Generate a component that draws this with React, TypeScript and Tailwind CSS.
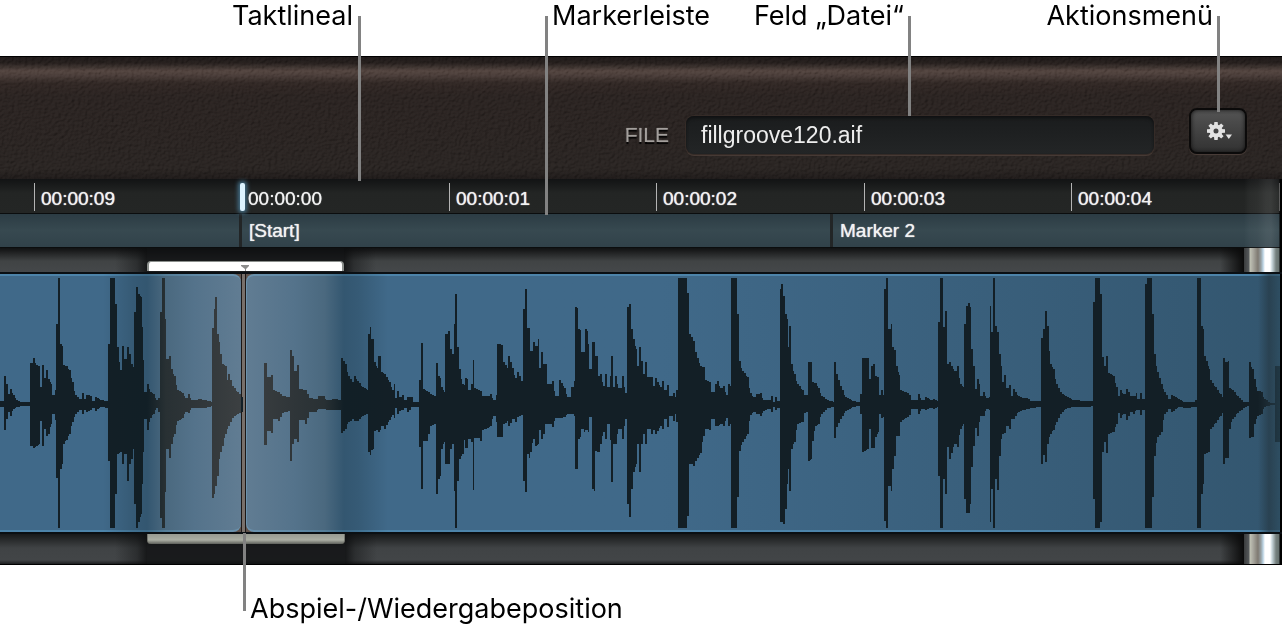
import { useId } from 'react'

// Envelope of the recording: [x, height above the axis, depth below it]
const PEAKS: [number, number, number][] = [
  [0, 3, 3], [4, 28, 26], [6, 20, 15], [8, 10, 8], [10, 15, 12], [13, 9, 5], [16, 4, 3], [20, 2, 2], [29, 2, 2],
  [30, 41, 42], [33, 46, 44], [36, 39, 42], [39, 38, 40], [40, 17, 17], [42, 39, 42], [44, 26, 25], [46, 34, 32],
  [48, 25, 30], [51, 20, 20], [52, 9, 10], [55, 14, 16], [56, 80, 74], [58, 126, 124], [60, 126, 124], [60, 60, 65],
  [62, 58, 60], [63, 39, 40], [66, 38, 36], [69, 34, 30], [72, 22, 18], [75, 9, 10], [79, 5, 6], [82, 11, 10],
  [84, 5, 6], [86, 9, 8], [90, 8, 6], [92, 3, 4], [95, 7, 7], [100, 4, 3], [105, 3, 4], [108, 60, 57],
  [110, 126, 124], [115, 126, 124], [115, 100, 90], [117, 98, 88], [117, 57, 50], [120, 34, 48], [122, 58, 60],
  [124, 45, 50], [127, 57, 77], [129, 50, 60], [131, 40, 55], [133, 37, 45], [134, 92, 100], [136, 117, 124],
  [138, 110, 118], [141, 107, 110], [142, 77, 80], [143, 44, 48], [144, 12, 15], [147, 20, 26], [150, 12, 14],
  [153, 10, 10], [156, 4, 4], [158, 6, 8], [160, 92, 114], [162, 126, 124], [165, 126, 124], [165, 85, 88],
  [166, 45, 45], [169, 48, 54], [171, 35, 40], [174, 28, 30], [177, 14, 17], [182, 11, 14], [185, 6, 8],
  [188, 10, 9], [191, 4, 4], [198, 5, 4], [205, 4, 4], [211, 2, 2], [212, 76, 94], [214, 95, 90], [215, 107, 82],
  [217, 107, 76], [217, 70, 72], [219, 62, 55], [220, 50, 48], [222, 40, 42], [225, 38, 30], [227, 24, 25],
  [228, 30, 22], [232, 18, 14], [237, 12, 10], [241, 7, 8], [243, 6, 7], [243, 0, 0], [263, 0, 0], [264, 41, 41],
  [267, 41, 41], [267, 27, 27], [271, 29, 29], [273, 14, 15], [278, 12, 17], [282, 8, 9], [288, 7, 7],
  [290, 54, 57], [292, 48, 40], [294, 33, 35], [297, 39, 38], [299, 15, 16], [305, 14, 20], [309, 6, 8],
  [315, 5, 8], [318, 8, 5], [323, 8, 5], [326, 4, 6], [332, 5, 6], [340, 4, 6], [341, 46, 29], [345, 40, 25],
  [348, 28, 18], [352, 22, 15], [354, 28, 17], [357, 23, 17], [362, 17, 12], [367, 14, 10], [368, 70, 48],
  [370, 77, 51], [371, 65, 46], [374, 65, 44], [374, 42, 27], [377, 36, 26], [378, 48, 28], [380, 48, 26],
  [381, 32, 22], [384, 30, 25], [389, 22, 16], [392, 14, 11], [394, 20, 14], [395, 6, 4], [397, 13, 10],
  [399, 7, 7], [402, 9, 6], [404, 4, 4], [407, 7, 8], [411, 7, 3], [413, 2, 3], [418, 2, 3], [419, 24, 43],
  [421, 61, 85], [423, 61, 85], [423, 15, 37], [426, 13, 37], [430, 10, 22], [435, 8, 20], [436, 6, 18],
  [436, 41, 90], [438, 41, 90], [438, 28, 75], [440, 26, 72], [441, 17, 45], [444, 12, 38], [445, 70, 60],
  [448, 73, 60], [450, 55, 45], [454, 45, 35], [454, 80, 87], [455, 110, 124], [457, 110, 124], [457, 57, 77],
  [459, 35, 55], [462, 20, 50], [464, 19, 36], [465, 26, 44], [467, 25, 44], [468, 14, 35], [471, 20, 38],
  [473, 44, 86], [474, 44, 86], [474, 16, 34], [480, 13, 37], [482, 8, 26], [485, 8, 25], [490, 10, 22],
  [493, 4, 12], [496, 9, 18], [497, 4, 10], [497, 60, 33], [501, 59, 33], [503, 42, 20], [507, 36, 17],
  [508, 48, 22], [512, 36, 15], [515, 26, 18], [517, 32, 13], [521, 23, 11], [523, 13, 8], [523, 95, 77],
  [525, 115, 88], [527, 115, 88], [527, 76, 50], [529, 76, 54], [530, 53, 48], [533, 62, 35], [535, 58, 42],
  [538, 65, 40], [539, 36, 26], [541, 52, 35], [543, 40, 30], [545, 40, 20], [547, 20, 20], [552, 23, 23],
  [555, 8, 14], [559, 24, 14], [564, 16, 13], [567, 7, 10], [571, 17, 10], [574, 23, 12], [575, 97, 65],
  [578, 95, 68], [578, 75, 35], [580, 74, 33], [581, 52, 25], [584, 52, 28], [585, 75, 26], [587, 73, 26],
  [588, 60, 28], [589, 35, 13], [592, 35, 30], [592, 62, 85], [594, 62, 87], [595, 48, 47], [597, 48, 48],
  [598, 28, 48], [600, 30, 40], [603, 18, 28], [605, 30, 35], [607, 17, 20], [610, 28, 36], [611, 48, 78],
  [613, 48, 78], [613, 17, 40], [615, 28, 40], [618, 16, 25], [622, 28, 35], [625, 11, 15], [627, 97, 100],
  [629, 100, 113], [631, 75, 85], [633, 65, 68], [636, 55, 60], [637, 38, 40], [639, 57, 68], [641, 43, 40],
  [643, 30, 30], [645, 42, 40], [647, 27, 25], [651, 27, 30], [653, 18, 26], [655, 26, 30], [660, 17, 22],
  [662, 23, 25], [664, 14, 15], [667, 19, 23], [669, 8, 12], [673, 11, 17], [675, 7, 10], [676, 14, 18],
  [678, 12, 16], [678, 126, 124], [687, 126, 124], [687, 111, 112], [689, 111, 112], [689, 70, 60], [693, 63, 62],
  [695, 52, 57], [700, 38, 49], [703, 37, 32], [705, 24, 25], [709, 22, 26], [711, 12, 15], [715, 20, 22],
  [717, 23, 22], [720, 16, 20], [723, 18, 22], [726, 9, 14], [728, 20, 22], [730, 18, 20], [731, 126, 124],
  [736, 126, 124], [737, 90, 93], [739, 90, 93], [739, 43, 47], [742, 33, 38], [747, 27, 30], [750, 11, 11],
  [753, 7, 8], [756, 10, 10], [760, 11, 12], [763, 4, 7], [768, 4, 5], [771, 8, 8], [773, 2, 3], [775, 7, 6],
  [777, 3, 4], [780, 4, 4], [780, 115, 118], [781, 120, 118], [783, 108, 120], [785, 90, 105], [787, 85, 80],
  [788, 57, 65], [789, 78, 87], [791, 78, 87], [791, 40, 45], [794, 30, 38], [797, 20, 20], [802, 14, 18],
  [804, 9, 9], [808, 8, 7], [808, 42, 57], [811, 42, 55], [812, 22, 37], [815, 21, 22], [818, 16, 20],
  [821, 8, 10], [827, 4, 4], [833, 2, 3], [834, 42, 34], [836, 30, 23], [840, 18, 15], [845, 7, 7], [852, 3, 3],
  [859, 2, 2], [860, 10, 10], [862, 46, 48], [867, 46, 45], [869, 25, 25], [871, 38, 44], [873, 40, 44],
  [875, 28, 33], [878, 27, 28], [879, 9, 10], [881, 14, 14], [884, 6, 12], [884, 115, 117], [886, 126, 124],
  [888, 126, 124], [888, 75, 82], [891, 80, 87], [892, 57, 65], [894, 54, 52], [896, 38, 32], [899, 29, 32],
  [900, 14, 18], [905, 12, 14], [909, 9, 11], [911, 4, 5], [918, 10, 10], [921, 4, 5], [925, 7, 6], [930, 4, 4],
  [933, 5, 5], [937, 3, 3], [938, 82, 72], [940, 126, 124], [943, 126, 124], [943, 77, 75], [945, 93, 90],
  [946, 93, 90], [947, 40, 43], [949, 42, 55], [954, 33, 40], [957, 38, 43], [960, 20, 25], [963, 17, 20],
  [964, 80, 95], [966, 98, 109], [968, 101, 109], [970, 97, 100], [971, 55, 63], [973, 38, 42], [975, 15, 24],
  [977, 25, 32], [979, 20, 18], [980, 8, 12], [983, 12, 12], [986, 6, 5], [989, 7, 6], [990, 98, 118],
  [991, 98, 118], [991, 72, 85], [993, 72, 85], [993, 126, 124], [995, 126, 124], [995, 78, 75], [997, 72, 86],
  [998, 72, 86], [999, 50, 52], [1001, 38, 35], [1002, 22, 30], [1004, 29, 29], [1006, 16, 22], [1009, 19, 25],
  [1011, 8, 15], [1013, 15, 15], [1018, 8, 8], [1022, 6, 6], [1026, 6, 5], [1030, 3, 4], [1040, 3, 3],
  [1041, 66, 60], [1043, 75, 51], [1045, 93, 58], [1047, 78, 40], [1050, 40, 30], [1053, 35, 26], [1056, 20, 18],
  [1060, 12, 10], [1065, 8, 5], [1072, 4, 3], [1085, 3, 3], [1093, 3, 2], [1093, 102, 95], [1095, 126, 124],
  [1100, 126, 124], [1100, 110, 118], [1102, 110, 118], [1102, 47, 48], [1104, 38, 38], [1106, 48, 49],
  [1108, 31, 30], [1113, 28, 28], [1116, 17, 20], [1118, 8, 9], [1120, 14, 14], [1123, 10, 10], [1126, 15, 16],
  [1130, 8, 8], [1133, 8, 10], [1136, 11, 6], [1137, 5, 6], [1140, 11, 11], [1142, 5, 6], [1145, 8, 8],
  [1145, 120, 124], [1147, 126, 124], [1152, 126, 124], [1152, 90, 93], [1154, 90, 93], [1154, 50, 52],
  [1157, 32, 33], [1161, 20, 28], [1164, 12, 10], [1168, 5, 5], [1171, 9, 8], [1178, 5, 3], [1183, 2, 4],
  [1195, 4, 3], [1197, 4, 3], [1197, 126, 124], [1201, 126, 124], [1201, 78, 90], [1203, 75, 80], [1204, 48, 50],
  [1209, 35, 48], [1210, 24, 25], [1215, 17, 19], [1220, 10, 12], [1223, 6, 8], [1223, 46, 60], [1225, 42, 54],
  [1228, 43, 54], [1229, 16, 25], [1232, 14, 15], [1237, 8, 9], [1243, 2, 4], [1248, 2, 2], [1249, 42, 34],
  [1252, 35, 33], [1254, 25, 20], [1257, 13, 12], [1261, 12, 10], [1264, 5, 3], [1270, 1, 1], [1274, 1, 1],
  [1275, 38, 38], [1282, 38, 38],
]

const AXIS = 130
const STEP = 2

// Each peak holds until the next one; a decay falls in small stairs.
function envelope(side: 1 | 2, sign: number) {
  const pts: string[] = []
  PEAKS.forEach((p, i) => {
    const [x, level] = [p[0], p[side]]
    const y = AXIS + sign * level
    const next = PEAKS[i + 1]
    pts.push(`${x} ${y}`)
    if (!next) return
    let last = y
    if (next[side] < level) {
      for (let sx = x + STEP; sx < next[0]; sx += STEP) {
        const v = level + ((next[side] - level) * (sx - x)) / (next[0] - x)
        const sy = AXIS + sign * Math.round(v)
        pts.push(`${sx} ${last}`, `${sx} ${sy}`)
        last = sy
      }
    }
    pts.push(`${next[0]} ${last}`)
  })
  return pts
}

const WAVE_PATH = `M${[...envelope(1, -1), ...envelope(2, 1).reverse()].join('L')}Z`

const TICKS = ['00:00:09', '00:00:00', '00:00:01', '00:00:02', '00:00:03', '00:00:04']

const CALLOUT_TEXT = "whitespace-nowrap font-['Inter',sans-serif] text-[27px] leading-[32px] text-black"

function Leather() {
  const id = useId()
  return (
    <svg className="absolute inset-0 h-full w-full opacity-20 mix-blend-soft-light" aria-hidden="true">
      <filter id={id} x="0" y="0" width="100%" height="100%">
        <feTurbulence type="fractalNoise" baseFrequency="0.3 0.36" numOctaves="2" seed="4" result="n" />
        <feDiffuseLighting in="n" lightingColor="#d0d0d0" surfaceScale="2.4">
          <feDistantLight azimuth="225" elevation="42" />
        </feDiffuseLighting>
      </filter>
      <rect width="100%" height="100%" filter={`url(#${id})`} />
    </svg>
  )
}

function Gear() {
  return (
    <svg viewBox="-2 0 28 20" className="h-5 w-7" fill="#e2e2e2" aria-hidden="true">
      <g transform="translate(10 10)">
        {[0, 45, 90, 135, 180, 225, 270, 315].map((a) => (
          <path key={a} d="M-2 -5 L-1.7 -9 H1.7 L2 -5 Z" transform={`rotate(${a})`} />
        ))}
        <circle r="4.5" fill="none" stroke="#e2e2e2" strokeWidth="4" />
      </g>
      <path d="M19.6 13.5h6.4L22.8 18z" />
    </svg>
  )
}

function Callouts() {
  return (
    <div className="relative z-20 grid h-14 grid-cols-[361fr_184fr_180fr_186fr_309fr_62fr]">
      <div className="relative flex justify-end pr-2">
        <span className={CALLOUT_TEXT}>Taktlineal</span>
        <span className="absolute right-0 top-4 h-[165px] w-[3px] bg-[#828282]" />
      </div>
      <div />
      <div className="relative flex justify-start pl-[7px]">
        <span className={CALLOUT_TEXT}>Markerleiste</span>
        <span className="absolute left-0 top-4 h-[199px] w-[3px] bg-[#828282]" />
      </div>
      <div className="relative flex justify-end pr-[7px]">
        <span className={CALLOUT_TEXT}>Feld „Datei“</span>
        <span className="absolute right-0 top-4 h-[100px] w-[3px] bg-[#828282]" />
      </div>
      <div className="relative flex justify-end pr-[7px]">
        <span className={CALLOUT_TEXT}>Aktionsmenü</span>
        <span className="absolute right-0 top-4 h-24 w-[3px] bg-[#828282]" />
      </div>
    </div>
  )
}

function Toolbar() {
  return (
    <header className="relative h-[123px] border-t border-black bg-[linear-gradient(#1d1817_0px,#231d1b_6px,#50423d_14px,#483b37_18px,#2e2522_26px,#28211f_38px,#272220_112px,#1c1817_123px)]">
      <Leather />
      <div className="relative flex items-start justify-end gap-[35px] pr-[35px] pt-[51px]">
        <div className="flex items-center gap-[17px] pt-2">
          <label htmlFor="file" className="text-[21px] text-[#a39f9c] [text-shadow:0_2px_1px_#000,0_0_1px_#a39f9c]">
            FILE
          </label>
          <input
            id="file"
            readOnly
            defaultValue="fillgroove120.aif"
            className="h-[38px] w-[468px] rounded-lg bg-linear-to-b from-[#1a1c1d] to-[#232526] px-[15px] text-[23px] text-[#ededed] shadow-[0_0_0_1px_#352b27,0_2px_0_#463a35,inset_0_2px_3px_#101112] outline-none"
          />
        </div>
        <button
          aria-label="Aktionsmenü"
          className="flex h-[46px] w-[58px] items-center justify-center rounded-lg border-2 border-[#0b0a0a] bg-linear-to-b from-[#545454] to-[#323232] shadow-[0_1px_1px_#4d403b,inset_0_0_4px_#111] outline-none"
        >
          <Gear />
        </button>
      </div>
    </header>
  )
}

function Ruler() {
  return (
    <div className="grid h-[34px] grid-cols-[34fr_207fr_208fr_207fr_208fr_207fr_208fr_3fr] bg-[linear-gradient(#121314,#232524_14px,#242625)] pt-1 pb-[2px] text-[19px] leading-[24px] text-[#f2f2f2] [text-shadow:0_0_1px_#fff]">
      <div />
      {TICKS.map((t, i) =>
        i === 1 ? (
          <div key={t} className="relative pt-1 pl-[7px]">
            <span className="absolute top-0 -left-px h-7 w-[5px] rounded-xs bg-[#dcf3ff] shadow-[0_0_4px_2px_#45718a]" />
            <span className="relative">{t}</span>
          </div>
        ) : (
          <div key={t} className="border-l border-[#b4b4b4] pt-1 pl-[6px]">
            {t}
          </div>
        ),
      )}
      <div className="border-l border-[#b4b4b4]" />
    </div>
  )
}

function MarkerStrip() {
  return (
    <div className="grid h-[35px] grid-cols-[239fr_591fr_452fr] border-y border-[#0b0d0e] bg-linear-to-b from-[#2c3c44] via-[#374950] to-[#31424a] text-[19px] leading-[33px] text-[#f2f2f2] [text-shadow:0_0_1px_#fff]">
      <div />
      <div className="border-l-[3px] border-[#222526] pl-[7px]">[Start]</div>
      <div className="border-l-[3px] border-[#222526] pl-[7px]">Marker 2</div>
    </div>
  )
}

// Shaded rail the waveform runs in, above and below the clips
function Rail({ bottom = false }: { bottom?: boolean }) {
  return (
    <div
      className={
        bottom
          ? 'relative grid h-[31px] grid-cols-[147fr_198fr_937fr] border-b border-black bg-[linear-gradient(#17191a,#232526_4px,#404345_14px,#424547_26px,#1d1f20_30px)]'
          : 'relative grid h-6 grid-cols-[147fr_197fr_938fr] bg-[linear-gradient(#111213,#1b1c1d_3px,#404344_13px,#45484a)]'
      }
    >
      <div className="bg-[linear-gradient(to_left,#0c0d0ecc,#0c0d0e66_10px,transparent_32px)]" />
      <div className="bg-[#0f1011cc]">
        <div
          className={
            bottom
              ? 'h-[10px] rounded-b-sm border-x border-[#75776f] bg-[linear-gradient(#979a91,#abaea3_6px,#5d5f5a)]'
              : 'mt-[13px] h-[10px] rounded-t-sm border-x-2 border-t border-[#8b8f8c] bg-white'
          }
        />
      </div>
      <div className="bg-[linear-gradient(to_right,#0c0d0ecc,#0c0d0e66_10px,transparent_32px)]" />
      <div className="absolute inset-y-0 right-[38px] w-6 bg-linear-to-l from-[#0a0a0a] to-transparent" />
      <div className="absolute inset-y-0 right-0 w-[38px] bg-[linear-gradient(to_right,#3a3c3d,#55585a_5px,#c0c2b4_6px,#a9a89f_9px,#7e7971_14px,#9aa3a6_17px,#b9d2e2_19px,#fff_21px,#fff_26px,#c9d7dc_28px,#75807e_32px,#667270_35px,#000_36px)]" />
    </div>
  )
}

function Waveform() {
  return (
    <div className="relative h-[262px] border-y-2 border-[#0a0f13] bg-[#3e3531]">
      <div className="grid h-full grid-cols-[241fr_5fr_1036fr]">
        <div className="rounded-r-lg border-y-2 border-[#4d84aa] bg-[#406989]" />
        <div className="border-x border-[#1b1716] bg-[#78706b]" />
        <div className="rounded-l-lg border-l border-y-2 border-[#4d84aa] bg-linear-to-r from-[#406989] from-40% to-[#33566f]" />
      </div>
      <svg
        viewBox="0 0 1282 258"
        preserveAspectRatio="none"
        className="absolute inset-0 h-full w-full"
        role="img"
        aria-label="fillgroove120.aif"
      >
        <path d={WAVE_PATH} fill="#131f26" />
      </svg>
      <div className="absolute inset-0 grid grid-cols-[147fr_94fr_5fr_98fr_938fr]">
        <div className="bg-[linear-gradient(to_left,#0d1f2640,#0d1f2633_14px,transparent_44px)]" />
        <div className="bg-[linear-gradient(to_right,#0d1f2640,#6c685f3d_20%,#b8a3942b_50%,#f5d4be2e)]" />
        <div />
        <div className="bg-[linear-gradient(to_left,#0d1f2640,#6c685f3d_20%,#b8a3942b_50%,#f5d4be2e)]" />
        <div className="bg-[linear-gradient(to_right,#0d1f2640,#0d1f2633_14px,transparent_44px)]" />
      </div>
      <div className="absolute inset-y-0 right-0 w-6 border-r-2 border-black bg-linear-to-r from-transparent via-[#23343e99] to-[#2a495a99]" />
    </div>
  )
}

function Playhead() {
  return (
    <div className="absolute inset-0 z-10 grid grid-cols-[240fr_1042fr]">
      <div />
      <div className="relative">
        <svg viewBox="0 0 10 6" className="absolute top-[209px] left-0 h-[6px] w-[10px]" aria-hidden="true">
          <path d="M1 0h8v1L6 4v2H5V4L1 1z" fill="#8c8c8c" />
        </svg>
      </div>
    </div>
  )
}

export default function App() {
  return (
    <main className="min-h-screen overflow-hidden bg-white font-['Liberation_Sans',Arial,sans-serif]">
      <Callouts />
      <section className="relative">
        <Toolbar />
        <div className="relative">
          <Ruler />
          <MarkerStrip />
          {/* glass roller passing over the ruler and the marker strip */}
          <div className="absolute inset-y-0 right-0 w-[38px] bg-[linear-gradient(to_right,transparent,#ffffff08_5px,#ffffff0d_14px,#ffffff18_22px,#ffffff1a_27px,#ffffff08_35px,#000_36px)]" />
        </div>
        <Rail />
        <Waveform />
        <Rail bottom />
        <Playhead />
      </section>
      <div className="relative z-20 grid grid-cols-[243fr_1039fr] pt-7">
        <div />
        <div className="relative pl-[7px]">
          <span className="absolute bottom-[14px] left-0 h-[78px] w-[3px] bg-[#828282]" />
          <span className={CALLOUT_TEXT}>Abspiel-/Wiedergabeposition</span>
        </div>
      </div>
    </main>
  )
}
